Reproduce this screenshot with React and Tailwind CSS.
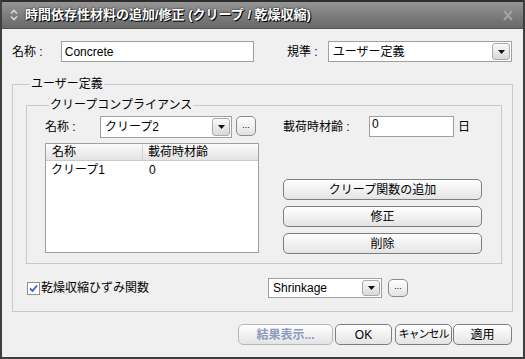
const font = "font-['Liberation_Sans','Noto_Sans_CJK_JP',sans-serif]";

const DropArrow = () => (
    <div className="w-[18px] h-full flex items-center justify-center rounded-[3px] border border-[#a9a9a9] bg-gradient-to-b from-[#fafafa] to-[#d9d9d9]">
        <svg width="7" height="4" viewBox="0 0 7 4">
            <path d="M0 0h7L3.5 4z" fill="#111" />
        </svg>
    </div>
);

const Select = ({value, className}) => (
    <div className={`flex items-stretch bg-white border border-[#a0a0a0] p-[1px] ${className}`}>
        <div className="flex-1 flex items-center pl-[3px] text-[12px] text-black">{value}</div>
        <DropArrow />
    </div>
);

const MoreBtn = ({h = "h-[20px]"}) => (
    <button
        type="button"
        className={`w-[20px] ${h} flex items-end justify-center pb-[5px] rounded-[5px] border border-[#8a8a8a] bg-gradient-to-b from-white to-[#e2e2e2] text-[9px] leading-none text-black`}
    >
        ...
    </button>
);

const Button = ({children, className = "", disabled}) => (
    <button
        type="button"
        className={`h-[21px] flex items-center justify-center whitespace-nowrap rounded-[5px] border bg-gradient-to-b from-white to-[#e4e4e4] ${
            disabled ? "border-[#b8b8b8] text-[#8d9bbd] font-bold" : "border-[#7e7e7e] text-black"
        } ${className || ""}`}
        disabled={disabled}
    >
        {children}
    </button>
);

const App = () => {
    return (
        <div className={`w-[525px] h-[359px] flex flex-col bg-[#f0f0f0] border-x-2 border-b-2 border-[#3f3f3f] ${font}`}>
            {/* title bar */}
            <div className="h-[29px] flex items-center border-t-2 border-[#2e2e2e] bg-gradient-to-b from-[#959595] to-[#686868] border-b border-b-[#555]">
                <svg className="ml-[6px]" width="12" height="14" viewBox="0 0 12 14">
                    <path d="M3 5.5L6 2.5L9 5.5M3 8.5L6 11.5L9 8.5" stroke="#d8d8d8" strokeWidth="1.6" fill="none" />
                </svg>
                <span className="ml-[5px] text-[13px] font-bold text-white [text-shadow:0_0_2px_#000,1px_1px_0_#000]">
                    時間依存性材料の追加/修正 (クリープ / 乾燥収縮)
                </span>
                <svg className="ml-auto mr-[10px]" width="10" height="11" viewBox="0 0 10 11">
                    <path d="M1 1L9 10M9 1L1 10" stroke="#a4a4a4" strokeWidth="2" />
                </svg>
            </div>

            <div className="flex flex-col pt-[12px] pl-[10px] pr-[11px]">
                {/* name / standard */}
                <div className="flex items-center h-[21px] text-[12px] text-black">
                    <span className="w-[49px]">名称 :</span>
                    <div className="w-[194px] h-full flex items-center bg-white border border-[#a0a0a0] pl-[3px]">Concrete</div>
                    <span className="ml-[33px] w-[41px]">規準 :</span>
                    <Select value="ユーザー定義" className="w-[185px] h-full" />
                </div>

                {/* user defined */}
                <fieldset className="mt-[14px] w-[501px] border border-[#cacaca] pl-[13px] pr-[10px] pb-[13px]">
                    <legend className="ml-[4px] px-[1px] text-[12px] leading-[16px] text-black">ユーザー定義</legend>

                    <fieldset className="mt-[5px] border border-[#cacaca] pl-[18px] pr-[18px] pb-[9px]">
                        <legend className="ml-[4px] px-[1px] text-[12px] leading-[16px] text-black">クリープコンプライアンス</legend>
                        <div className="flex pt-[3px] gap-[24px]">
                            <div className="w-[214px] flex flex-col">
                                <div className="flex items-center h-[22px] text-[12px]">
                                    <span className="w-[55px]">名称 :</span>
                                    <Select value="クリープ2" className="w-[132px] h-full" />
                                    <div className="ml-[4px] self-start">
                                        <MoreBtn />
                                    </div>
                                </div>
                                <div className="mt-[5px] h-[110px] bg-white border border-[#a0a0a0] text-[12px]">
                                    <div className="flex h-[17px] bg-gradient-to-b from-[#fbfbfb] to-[#e3e3e3] border-b border-[#c9c9c9]">
                                        <div className="w-[97px] pl-[6px] flex items-center border-r border-[#d4d4d4]">名称</div>
                                        <div className="pl-[5px] flex items-center">載荷時材齢</div>
                                    </div>
                                    <div className="flex h-[18px] items-center">
                                        <div className="w-[97px] pl-[5px]">クリープ1</div>
                                        <div className="pl-[6px]">0</div>
                                    </div>
                                </div>
                            </div>

                            <div className="w-[199px] flex flex-col">
                                <div className="flex items-center h-[21px] text-[12px]">
                                    <span className="w-[86px]">載荷時材齢 :</span>
                                    <div className="w-[85px] h-full bg-white border border-[#a0a0a0] pl-[2px] leading-[14px]">0</div>
                                    <span className="ml-[4px]">日</span>
                                </div>
                                <div className="mt-[42px] flex flex-col gap-[6px] text-[12px]">
                                    <Button>クリープ関数の追加</Button>
                                    <Button>修正</Button>
                                    <Button>削除</Button>
                                </div>
                            </div>
                        </div>
                    </fieldset>

                    {/* shrinkage */}
                    <div className="mt-[14px] flex items-center h-[20px] text-[12px]">
                        <div className="ml-[1px] w-[13px] h-[13px] bg-white border border-[#8e8f8f] flex items-center justify-center">
                            <svg width="9" height="9" viewBox="0 0 9 9">
                                <path d="M1 4.5L3.5 7L8 1.5" stroke="#3a5fc8" strokeWidth="1.8" fill="none" />
                            </svg>
                        </div>
                        <span className="ml-[1px] w-[227px]">乾燥収縮ひずみ関数</span>
                        <Select value="Shrinkage" className="w-[114px] h-full" />
                        <div className="ml-[6px]">
                            <MoreBtn h="h-[18px]" />
                        </div>
                    </div>
                </fieldset>

                {/* footer buttons */}
                <div className="mt-[12px] flex justify-end items-center text-[12px]">
                    <Button disabled className="w-[95px]">結果表示...</Button>
                    <Button className="ml-[2px] w-[57px]">OK</Button>
                    <Button className="ml-[3px] w-[57px] text-[11px] tracking-[-1px]">キャンセル</Button>
                    <Button className="ml-[1px] w-[59px]">適用</Button>
                </div>
            </div>
        </div>
    );
};

export default App;
